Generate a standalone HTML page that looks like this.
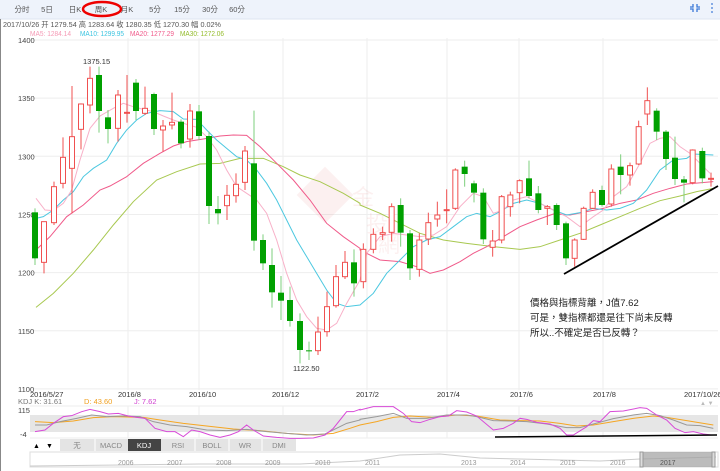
<!DOCTYPE html>
<html><head><meta charset="utf-8"><style>
html,body{margin:0;padding:0;background:#fff;width:720px;height:471px;overflow:hidden;font-family:"Liberation Sans","Noto Sans CJK TC",sans-serif}
svg{display:block}
</style></head><body>
<svg id="s" width="720" height="471" xmlns="http://www.w3.org/2000/svg" font-family="Liberation Sans, Noto Sans CJK TC, sans-serif">
<rect x="0" y="0" width="720" height="19" fill="#eef3fb"/>
<line x1="0" y1="19" x2="720" y2="19" stroke="#dde4f0"/>
<g font-size="7.5" fill="#555" text-anchor="middle">
<text x="22" y="12">分时</text><text x="47" y="12">5日</text><text x="75" y="12">日K</text><text x="101" y="12">周K</text><text x="127" y="12">月K</text><text x="155" y="12">5分</text><text x="182" y="12">15分</text><text x="210" y="12">30分</text><text x="237" y="12">60分</text>
</g>
<ellipse cx="102" cy="9" rx="19" ry="7" fill="none" stroke="#e00" stroke-width="2.5"/>
<g stroke="#3a78d8" stroke-width="1.3" fill="none"><path d="M693 4v3h-3M697 4v3h3M693 12v-3h-3M697 12v-3h3"/></g>
<g fill="#3a78d8"><circle cx="712" cy="4" r="0.9"/><circle cx="712" cy="8" r="0.9"/><circle cx="712" cy="12" r="0.9"/></g>
<text x="3" y="27" font-size="7.3" fill="#555" textLength="218" lengthAdjust="spacingAndGlyphs">2017/10/26 开 1279.54 高 1283.64 收 1280.35 低 1270.30 幅 0.02%</text>
<g font-size="7"><text x="30" y="36" fill="#f59ab5" textLength="41" lengthAdjust="spacingAndGlyphs">MA5: 1284.14</text><text x="80" y="36" fill="#3cc4e0" textLength="44" lengthAdjust="spacingAndGlyphs">MA10: 1299.95</text><text x="130" y="36" fill="#f05a8a" textLength="44" lengthAdjust="spacingAndGlyphs">MA20: 1277.29</text><text x="180" y="36" fill="#94bc2c" textLength="44" lengthAdjust="spacingAndGlyphs">MA30: 1272.06</text></g>
<line x1="0.5" y1="19" x2="0.5" y2="471" stroke="#888"/>
<g id="grid" stroke="#eee" stroke-width="1"></g>
<g id="ylab" font-size="7.5" fill="#444"></g>
<g opacity="0.08" fill="#e05050"><rect x="305" y="175" width="40" height="40" transform="rotate(45 325 195)"/><text x="352" y="205" font-size="22">金</text><text x="366" y="232" font-size="22">投</text><text x="378" y="252" font-size="22">網</text></g>
<g id="ma"></g>
<g id="c"></g>
<line x1="564" y1="274" x2="718" y2="186" stroke="#000" stroke-width="1.8"/>
<text x="83" y="64" font-size="7.5" fill="#333">1375.15</text>
<text x="293" y="371" font-size="7.5" fill="#333">1122.50</text>
<g font-size="9.5" fill="#222"><text x="530" y="306">價格與指標背離，J值7.62</text><text x="530" y="321">可是，雙指標都還是往下尚未反轉</text><text x="530" y="336">所以..不確定是否已反轉？</text></g>
<g font-size="7.5" fill="#333"><text x="30" y="397">2016/5/27</text><text x="118" y="397">2016/8</text><text x="189" y="397">2016/10</text><text x="272" y="397">2016/12</text><text x="356" y="397">2017/2</text><text x="437" y="397">2017/4</text><text x="510" y="397">2017/6</text><text x="593" y="397">2017/8</text><text x="684" y="397">2017/10/26</text></g>
<g font-size="7.5"><text x="18" y="404" fill="#777">KDJ  K: 31.61</text><text x="84" y="404" fill="#f0a020">D: 43.60</text><text x="134" y="404" fill="#d040d0">J: 7.62</text></g>
<text x="700" y="405" font-size="6" fill="#bbb">▲ ▼</text>
<rect x="30" y="415" width="688" height="17" fill="#e6e6e6"/>
<line x1="30" y1="406" x2="718" y2="406" stroke="#eee"/><line x1="30" y1="438" x2="718" y2="438" stroke="#eee"/>
<text x="18" y="413" font-size="7.5" fill="#444">115</text><text x="20" y="437" font-size="7.5" fill="#444">-4</text>
<g id="kdj" fill="none"></g>
<line x1="495" y1="437" x2="717" y2="435" stroke="#000" stroke-width="1.5"/>
<g font-size="7.5">
<text x="33" y="448" font-size="7">▲</text><text x="46" y="448" font-size="7">▼</text>
<rect x="60" y="439" width="236" height="12" fill="#e4e4e4"/>
<rect x="128" y="439" width="33" height="12" fill="#444"/>
<g stroke="#fff"><line x1="95" y1="439" x2="95" y2="451"/><line x1="195" y1="439" x2="195" y2="451"/><line x1="229" y1="439" x2="229" y2="451"/><line x1="262" y1="439" x2="262" y2="451"/></g>
<g text-anchor="middle" fill="#888"><text x="77" y="448">无</text><text x="111" y="448">MACD</text><text x="144" y="448" fill="#fff">KDJ</text><text x="178" y="448">RSI</text><text x="212" y="448">BOLL</text><text x="245" y="448">WR</text><text x="279" y="448">DMI</text></g>
</g>
<rect x="30" y="452" width="688" height="15" fill="#fff" stroke="#ddd"/>
<polyline points="30,466 120,465 200,464 300,464 360,461 400,455 440,454 480,458 520,459 560,460 600,461 640,459 680,458 716,457" fill="none" stroke="#ccc"/>
<rect x="642" y="452" width="71" height="15" fill="#a0a0a0" opacity="0.7"/>
<rect x="640" y="452" width="3" height="15" fill="#ddd" stroke="#999"/><rect x="712" y="452" width="3" height="15" fill="#ddd" stroke="#999"/>
<g font-size="7" fill="#999"><text x="118" y="465">2006</text><text x="167" y="465">2007</text><text x="216" y="465">2008</text><text x="265" y="465">2009</text><text x="315" y="465">2010</text><text x="365" y="465">2011</text><text x="461" y="465">2013</text><text x="510" y="465">2014</text><text x="560" y="465">2015</text><text x="610" y="465">2016</text><text x="660" y="465" fill="#555">2017</text></g>
</svg>
<script>
var NS="http://www.w3.org/2000/svg";
function el(p,t,a){var e=document.createElementNS(NS,t);for(var k in a)e.setAttribute(k,a[k]);p.appendChild(e);return e;}
var g=document.getElementById('grid'),yl=document.getElementById('ylab');
[1400,1350,1300,1250,1200,1150,1100].forEach(function(p){var y=40+(1400-p)*1.163;el(g,'line',{x1:30,y1:y,x2:718,y2:y});var t=el(yl,'text',{x:18,y:y+3});t.textContent=p;});
[128,199,283,367,447,519,603].forEach(function(x){el(g,'line',{x1:x,y1:38,x2:x,y2:390});el(g,'line',{x1:x,y1:406,x2:x,y2:438});});
var A=[[35,517,655,505,675,'g'],[44,545,667,545,700,'r'],[54,440,548,425,555,'r'],[63,352,430,292,445,'r'],[72,290,385,138,520,'r'],[81,192,268,190,328,'r'],[90,115,195,80,220,'r'],[99,105,213,80,278,'g'],[108,232,267,210,310,'g'],[118,165,265,150,305,'r'],[127,217,220,105,248,'r'],[136,128,213,117,240,'g'],[145,205,220,140,225,'r'],[154,162,267,158,285,'g'],[163,258,270,240,335,'r'],[172,247,255,158,268,'r'],[181,245,310,238,325,'g'],[190,213,297,192,323,'r'],[199,214,288,195,300,'g'],[209,288,498,275,552,'g'],[218,507,520,468,553,'g'],[227,466,497,435,540,'r'],[236,433,467,400,488,'r'],[245,333,427,318,450,'r'],[254,370,602,212,632,'g'],[263,600,670,583,690,'g'],[272,675,757,625,803,'g'],[281,758,782,708,840,'g'],[290,780,843,740,860,'g'],[300,843,930,820,970,'g'],[309,931,934,905,960,'g'],[318,876,932,830,945,'r'],[327,800,875,755,890,'r'],[336,710,797,675,803,'r'],[345,667,710,633,717,'r'],[354,667,730,628,770,'g']];
var B=[[10,628,725,610,745,'r'],[40,583,628,565,640,'r'],[68,578,583,560,600,'r'],[95,500,577,490,605,'r'],[122,495,578,475,620,'g'],[150,580,685,570,720,'g'],[178,600,688,580,710,'r'],[205,548,597,518,615,'r'],[232,525,537,485,560,'r'],[260,509,512,448,550,'r'],[286,390,505,385,510,'r'],[314,380,402,362,440,'g'],[342,430,458,422,487,'g'],[370,458,598,445,612,'g'],[398,603,622,570,650,'r'],[425,470,600,465,610,'r'],[451,465,500,455,530,'r'],[479,422,458,418,490,'r'],[507,415,468,362,475,'g'],[535,460,510,438,520,'g'],[562,500,505,495,555,'r'],[590,495,555,490,570,'g'],[618,550,655,545,675,'g'],[644,600,655,595,680,'r'],[671,505,598,500,600,'r'],[698,457,505,448,507,'r'],[726,450,495,437,500,'g'],[754,387,492,373,500,'r'],[782,380,405,343,463,'g'],[810,377,405,368,437,'r'],[836,260,372,242,375,'r'],[862,182,222,142,255,'r'],[890,212,275,205,300,'g'],[918,275,357,270,390,'g'],[945,353,417,290,435,'g'],[972,418,428,408,487,'g'],[998,330,428,328,433,'r'],[1027,333,415,323,430,'g'],[1053,415,418,398,440,'r']];
var c=document.getElementById('c');
function draw(x,a,b,wt,wb,col){var y1=40+a/3,y2=40+b/3,w1=40+wt/3,w2=40+wb/3;
 if(col=='g'){el(c,'line',{x1:x,y1:w1,x2:x,y2:w2,stroke:'#7ccf7c','stroke-width':1});el(c,'rect',{x:x-3,y:y1,width:6,height:Math.max(1,y2-y1),fill:'#00a000'});}
 else{el(c,'line',{x1:x,y1:w1,x2:x,y2:y1,stroke:'#f05050'});el(c,'line',{x1:x,y1:y2,x2:x,y2:w2,stroke:'#f05050'});el(c,'rect',{x:x-2.5,y:y1,width:5,height:Math.max(0.5,y2-y1),fill:'#fff',stroke:'#f05050','stroke-width':1});}}
A.forEach(function(d){draw(d[0],d[1],d[2],d[3],d[4],d[5]);});
B.forEach(function(d){draw(360+d[0]/3,d[1],d[2],d[3],d[4],d[5]);});
function pl(p,a,b,col,oy,w){var pts=a.map(function(q){return (q[0]/3)+','+(oy+q[1]/3)}).concat(b.map(function(q){return (360+q[0]/3)+','+(oy+q[1]/3)}));el(p,'polyline',{points:pts.join(' '),fill:'none',stroke:col,'stroke-width':w||1});}
var m=document.getElementById('ma');
pl(m,[[108,802],[160,760],[220,700],[280,630],[340,555],[400,485],[470,420],[530,395],[600,372],[660,370],[720,355],[790,355],[850,380],[900,405],[960,425],[1030,460],[1080,490]],[[0,495],[60,520],[120,550],[180,580],[250,600],[320,610],[400,620],[480,628],[540,620],[600,600],[660,580],[720,555],[780,530],[840,505],[900,482],[960,468],[1010,455],[1060,445]],'#a8c850',40);
pl(m,[[108,630],[150,590],[200,530],[250,495],[300,450],[330,438],[380,410],[430,370],[480,340],[520,318],[560,305],[610,297],[660,288],[700,285],[740,286],[780,320],[830,370],[880,420],[930,480],[980,550],[1030,590],[1080,625]],[[0,630],[60,660],[120,665],[170,680],[210,700],[250,690],[300,665],[340,640],[380,620],[430,590],[480,560],[530,540],[580,522],[630,525],[680,515],[730,505],[780,490],[830,480],[880,460],[930,445],[980,432],[1060,425]],'#f05a8a',40);
pl(m,[[108,535],[130,530],[160,510],[190,480],[220,455],[250,410],[280,385],[320,360],[350,310],[380,270],[410,240],[440,220],[480,212],[520,215],[550,237],[590,238],[620,270],[650,300],[680,325],[710,350],[740,360],[770,390],[800,430],[830,480],[860,540],[890,600],[920,650],[950,700],[980,750],[1010,790],[1040,800],[1080,795]],[[0,795],[40,760],[80,700],[120,660],[160,620],[200,600],[240,590],[280,560],[320,530],[350,520],[390,530],[420,515],[460,490],[500,480],[540,490],[580,510],[620,525],[660,518],[700,505],[740,510],[780,505],[820,490],[860,450],[900,390],[940,360],[980,355],[1000,342],[1060,345]],'#4cc8e0',40);
pl(m,[[108,475],[135,510],[160,512],[190,490],[215,450],[240,360],[270,265],[300,228],[340,205],[370,190],[400,200],[430,208],[460,215],[490,228],[520,240],[550,250],[590,262],[620,290],[650,330],[680,390],[710,440],[740,460],[770,480],[800,520],[830,600],[860,700],[890,780],[920,830],[950,865],[980,870],[1010,850],[1040,790],[1080,720]],[[20,640],[60,590],[100,580],[140,585],[180,590],[220,585],[260,560],[300,500],[340,460],[370,470],[400,520],[430,510],[460,480],[500,470],[540,490],[580,510],[620,530],[660,560],[700,530],[730,510],[760,470],[800,440],[840,370],[870,310],[900,295],[930,290],[960,320],[990,340],[1020,370],[1050,400]],'#f8b0c8',40);
var k=document.getElementById('kdj');
pl(k,[[105,185],[160,188],[220,183],[280,173],[340,170],[430,172],[480,180],[550,190],[620,198],[700,207],[780,212],[860,220],[940,225],[1000,220],[1050,205],[1080,195]],[[0,195],[50,185],[100,172],[150,168],[220,172],[290,165],[350,168],[420,180],[480,182],[540,183],[600,190],[650,198],[700,195],[760,185],[820,175],[880,168],[920,172],[980,182],[1060,195]],'#f5a623',360);
pl(k,[[105,195],[140,195],[180,185],[230,175],[275,165],[320,170],[370,168],[420,170],[460,185],[510,195],[560,200],[620,210],[680,212],[740,208],[800,215],[860,220],[920,225],[975,222],[1040,190],[1080,180]],[[0,178],[50,170],[100,160],[140,175],[200,175],[260,165],[320,165],[350,170],[400,182],[450,183],[500,185],[560,192],[620,203],[660,203],[700,192],[760,176],[820,165],[860,160],[900,167],[940,180],[980,195],[1020,197],[1060,205]],'#999',360);
pl(k,[[105,215],[135,210],[160,190],[190,170],[215,167],[245,155],[270,148],[300,155],[325,162],[355,160],[385,168],[410,172],[435,175],[465,205],[500,215],[525,215],[550,230],[575,210],[600,215],[630,225],[660,232],[690,225],[715,215],[740,195],[760,210],[790,228],[830,232],[870,235],[900,235],[940,234],[975,225],[1000,205],[1040,155],[1060,155],[1080,148]],[[0,150],[40,140],[100,140],[130,160],[155,185],[180,188],[210,178],[240,170],[265,168],[290,152],[320,156],[350,168],[400,210],[430,205],[460,190],[480,175],[500,178],[530,187],[570,192],[600,205],[620,225],[640,225],[680,200],[700,182],[720,185],[750,155],[790,153],[840,143],[860,145],[890,165],[920,180],[945,205],[975,218],[1000,215],[1030,222],[1055,225]],'#d84ad8',360);
</script>
</body></html>
